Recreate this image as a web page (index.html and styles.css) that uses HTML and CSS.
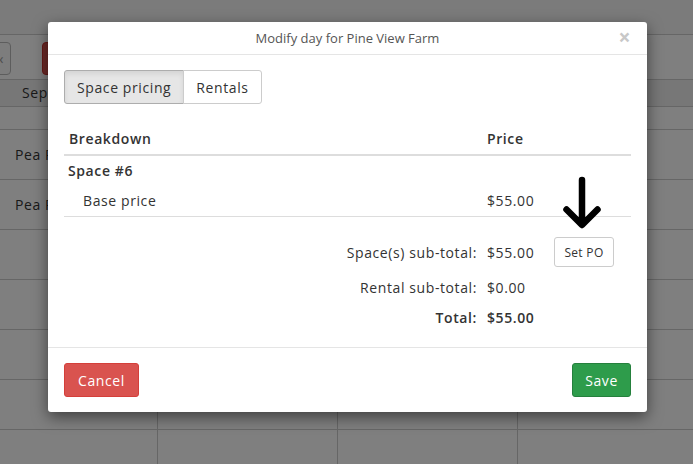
FILE: index.html
```html
<!DOCTYPE html>
<html lang="en">
<head>
<meta charset="utf-8">
<title>Modify day</title>
<link rel="stylesheet" href="styles.css">
</head>
<body>
<div class="page">
  <div class="topbar"></div>
  <div class="toolbar">
    <span class="tool-btn">‹</span>
    <span class="tool-btn danger"></span>
  </div>
  <table class="grid">
    <colgroup><col class="g1"><col class="g2"><col class="g3"><col class="g4"></colgroup>
    <thead><tr><th>Sep</th><th></th><th></th><th></th></tr></thead>
    <tbody>
      <tr class="filter"><td></td><td></td><td></td><td></td></tr>
      <tr><td>Pea Patch</td><td></td><td></td><td></td></tr>
      <tr><td>Pea Patch</td><td></td><td></td><td></td></tr>
      <tr><td></td><td></td><td></td><td></td></tr>
      <tr><td></td><td></td><td></td><td></td></tr>
      <tr><td></td><td></td><td></td><td></td></tr>
      <tr><td></td><td></td><td></td><td></td></tr>
      <tr><td></td><td></td><td></td><td></td></tr>
    </tbody>
  </table>
</div>
<div class="backdrop"></div>
<div class="modal">
  <div class="modal-header">
    <h4 class="modal-title">Modify day for Pine View Farm</h4>
    <span class="close">×</span>
  </div>
  <div class="modal-body">
    <div class="btn-group">
      <button class="tab active">Space pricing</button>
      <button class="tab">Rentals</button>
    </div>
    <table class="breakdown">
      <colgroup><col class="c1"><col class="c2"><col class="c3"></colgroup>
      <thead><tr><th>Breakdown</th><th>Price</th><th></th></tr></thead>
      <tbody>
        <tr class="space"><td>Space #6</td><td></td><td></td></tr>
        <tr class="item"><td class="indent">Base price</td><td>$55.00</td><td></td></tr>
      </tbody>
    </table>
    <div class="totals">
      <div class="t-label">Space(s) sub-total:</div>
      <div class="t-value">$55.00</div>
      <div class="t-action"><button class="btn-po">Set PO</button></div>
      <div class="t-label">Rental sub-total:</div>
      <div class="t-value">$0.00</div>
      <div class="t-action"></div>
      <div class="t-label strong">Total:</div>
      <div class="t-value strong">$55.00</div>
      <div class="t-action"></div>
    </div>
  </div>
  <div class="modal-footer">
    <button class="btn btn-danger">Cancel</button>
    <button class="btn btn-success">Save</button>
  </div>
  <svg class="arrow" width="48" height="56" viewBox="0 0 48 56" aria-hidden="true">
    <path d="M24 4 V48 M8.5 33.5 L24 49 L39.5 33.5" fill="none" stroke="#000" stroke-width="6.5" stroke-linecap="round" stroke-linejoin="round"/>
  </svg>
</div>
</body>
</html>
```
FILE: styles.css
```css
* { box-sizing: border-box; }
html, body { margin: 0; padding: 0; }
body {
  width: 693px;
  height: 464px;
  overflow: hidden;
  font-family: "Open Sans", "Liberation Sans", sans-serif;
  font-size: 14px;
  letter-spacing: 0.6px;
  color: #333;
  background: #fff;
  position: relative;
}

/* underlying page */
.page { width: 693px; }
.topbar { height: 35px; background: #f6f6f6; border-bottom: 1px solid #ccc; }
.toolbar { height: 45px; display: flex; align-items: center; gap: 31px; margin-left: -40px; border-bottom: 1px solid #ccc; padding-top: 2px; }
.tool-btn { width: 51px; height: 33px; border: 1px solid #bbb; border-radius: 4px; background: #fafafa; display: flex; align-items: center; justify-content: flex-end; padding-right: 6px; color: #999; }
.tool-btn.danger { width: 60px; background: #d9534f; border-color: #c9302c; }
.grid { width: 693px; border-collapse: collapse; table-layout: fixed; }
.grid .g1 { width: 157px; }
.grid .g2, .grid .g3 { width: 180px; }
.grid th { height: 26px; background: #eee; text-align: left; padding: 0 0 0 22px; font-weight: 400; border-bottom: 1px solid #ccc; }
.grid td { height: 50px; border-bottom: 1px solid #ccc; border-left: 1px solid #ccc; padding: 0 0 0 15px; }
.grid td:first-child { border-left: none; }
.grid tr.filter td { height: 23px; }

.backdrop { position: absolute; inset: 0; background: rgba(0, 0, 0, 0.5); }

/* modal */
.modal {
  position: absolute;
  left: 48px;
  top: 22px;
  width: 599px;
  background: #fff;
  border-radius: 3px;
  box-shadow: 0 5px 15px rgba(0, 0, 0, 0.5);
}
.modal-header {
  height: 33px;
  border-bottom: 1px solid #e5e5e5;
  display: flex;
  align-items: center;
  justify-content: center;
  position: relative;
}
.modal-title { margin: 0; font-size: 13px; font-weight: 500; color: #555; line-height: 20px; letter-spacing: 0; }
.close { position: absolute; right: 16px; top: 5px; font-size: 21px; font-weight: 700; line-height: 20px; color: #c8c8c8; }

.modal-body { padding: 15px 16px 15px; }
.btn-group { display: flex; margin-bottom: 20px; }
.tab {
  font: inherit;
  font-size: 14px;
  letter-spacing: 0.6px;
  color: #333;
  height: 34px;
  padding: 0 12px;
  background: #fff;
  border: 1px solid #ccc;
  cursor: pointer;
}
.tab:first-child { border-radius: 3px 0 0 3px; }
.tab:last-child { border-radius: 0 3px 3px 0; margin-left: -1px; }
.tab.active { background: #e6e6e6; border-color: #adadad; box-shadow: inset 0 3px 5px rgba(0, 0, 0, 0.08); }

.breakdown { width: 567px; border-collapse: collapse; table-layout: fixed; }
.breakdown .c1 { width: 418px; }
.breakdown .c2 { width: 66px; }
.breakdown .c3 { width: 83px; }
.breakdown th { text-align: left; font-weight: 600; padding: 5px 5px; line-height: 20px; border-bottom: 2px solid #ddd; }
.breakdown td { padding: 5px 5px; line-height: 20px; }
.breakdown tr.space td { font-weight: 600; padding-left: 4px; }
.breakdown tr.item td { border-bottom: 1px solid #ddd; }
.breakdown td.indent { padding-left: 19px; }

.totals {
  display: grid;
  grid-template-columns: 418px 66px 83px;
  grid-template-rows: 40px 30px 30px;
  margin-top: 15px;
  align-items: center;
}
.t-label { text-align: right; padding-right: 5px; }
.t-value { padding-left: 5px; }
.strong { font-weight: 600; }
.t-action { padding-left: 6px; }
.btn-po {
  font: inherit;
  font-size: 12px;
  letter-spacing: 0.3px;
  color: #333;
  width: 60px;
  height: 30px;
  background: #fff;
  border: 1px solid #ccc;
  border-radius: 3px;
}

.modal-footer {
  border-top: 1px solid #e5e5e5;
  padding: 15px 16px;
  display: flex;
  justify-content: space-between;
}
.btn {
  font: inherit;
  font-size: 14px;
  letter-spacing: 0.6px;
  color: #fff;
  height: 34px;
  padding: 0 8px;
  border-radius: 3px;
  border: 1px solid transparent;
}
.btn-danger { background: #d9534f; border-color: #d43f3a; width: 75px; }
.btn-success { background: #2e9c4b; border-color: #25803d; width: 59px; }

.arrow { position: absolute; left: 510px; top: 154px; }
```
